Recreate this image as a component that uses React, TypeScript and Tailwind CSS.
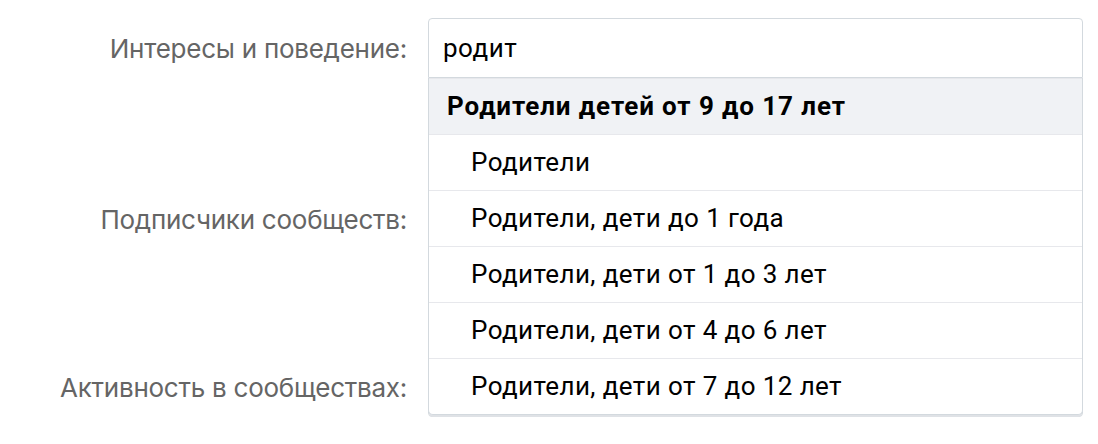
import React from 'react';

const options = [
  'Родители',
  'Родители, дети до 1 года',
  'Родители, дети от 1 до 3 лет',
  'Родители, дети от 4 до 6 лет',
  'Родители, дети от 7 до 12 лет',
];

const labelFont = { fontFamily: 'Inter, "Noto Sans", sans-serif' };
const fieldFont = { fontFamily: 'Roboto, "Noto Sans", sans-serif' };

const Row: React.FC<{ label: string; className?: string; children?: React.ReactNode }> = ({ label, className, children }) => (
  <div className={`flex items-center ${className || ''}`}>
    <div className="w-[407px] shrink-0 text-right text-[26px] tracking-[-0.25px] text-[#656565]" style={labelFont}>
      {label}
    </div>
    <div className="ml-[21px] w-[655px] relative">{children}</div>
  </div>
);

export default function App() {
  return (
    <div className="w-[1098px] h-[444px] bg-white overflow-hidden pt-[18px]">
      <Row label="Интересы и поведение:" className="relative z-10">
        <div className="h-[60px] border border-[#d3d9de] rounded-[4px] rounded-b-none flex items-center px-[14px] text-[26px] tracking-[0.5px] text-black bg-white" style={fieldFont}>
          родит
        </div>
        <div className="absolute left-0 right-0 top-[60px] bg-white border border-t-0 border-[#d3d9de] rounded-b-[5px] shadow-[0_3px_0_-1px_#dfe2e6]" style={fieldFont}>
          <div className="h-[56px] bg-[#f0f2f5] flex items-center pl-[18px] text-[26px] font-bold tracking-[0.9px] text-black border-t border-[#e7e8ec]">
            Родители детей от 9 до 17 лет
          </div>
          {options.map((o) => (
            <div key={o} className="h-[56px] flex items-center pl-[42px] text-[26px] tracking-[0.4px] text-black border-t border-[#e7e8ec]">
              {o}
            </div>
          ))}
        </div>
      </Row>
      <Row label="Подписчики сообществ:" className="mt-[111px]">
        <div className="h-[60px] border border-[#d3d9de] rounded-[4px]" />
      </Row>
      <Row label="Активность в сообществах:" className="mt-[108px]">
        <div className="h-[60px] border border-[#d3d9de] rounded-[4px]" />
      </Row>
    </div>
  );
}
